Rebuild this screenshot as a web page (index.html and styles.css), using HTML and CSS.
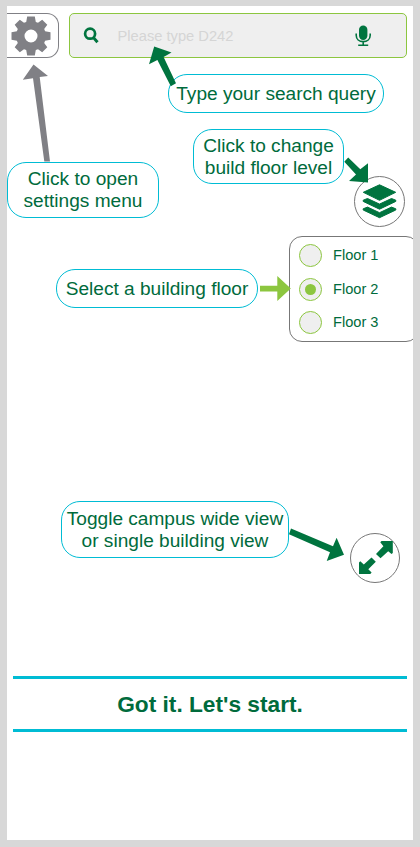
FILE: index.html
```html
<!DOCTYPE html>
<html lang="en">
<head>
<meta charset="utf-8">
<meta name="viewport" content="width=device-width, initial-scale=1">
<title>Campus map help</title>
<link rel="stylesheet" href="styles.css">
</head>
<body>
<main class="screen">
  <header class="topbar">
    <button class="settings" aria-label="Settings">
      <svg width="40" height="40" viewBox="-20 -20 40 40">
        <path class="gray" fill-rule="evenodd" d="M-3.8-19.5H3.8L4.8-14.1L7-13.2L11.2-16.3L16.3-11.2L13.2-7L14.1-4.8L19.5-3.8V3.8L14.1 4.8L13.2 7L16.3 11.2L11.2 16.3L7 13.2L4.8 14.1L3.8 19.5H-3.8L-4.8 14.1L-7 13.2L-11.2 16.3L-16.3 11.2L-13.2 7L-14.1 4.8L-19.5 3.8V-3.8L-14.1-4.8L-13.2-7L-16.3-11.2L-11.2-16.3L-7-13.2L-4.8-14.1ZM0-6.5A6.5 6.5 0 1 0 0 6.5A6.5 6.5 0 1 0 0-6.5Z"/>
      </svg>
    </button>
    <div class="search">
      <svg class="glass" width="16" height="17" viewBox="0 0 16 17">
        <circle cx="7.1" cy="6.7" r="5" fill="none" stroke="#00743f" stroke-width="2.7"/>
        <path d="M10.5 10.6L14.5 15.3" fill="none" stroke="#00743f" stroke-width="3"/>
      </svg>
      <span class="placeholder">Please type D242</span>
      <svg class="mic" width="16" height="22" viewBox="0 0 16 22">
        <rect class="green" x="4" y=".5" width="8.4" height="14.5" rx="4.2"/>
        <path d="M1.2 8.5V10.3C1.2 14.1 4.2 16.6 8.2 16.6S15.2 14.1 15.2 10.3V8.5M8.2 16.4V20M3.2 20.2H13.2" fill="none" stroke="#00743f" stroke-width="1.6"/>
      </svg>
    </div>
  </header>

  <p class="bubble tip-search">Type your search query</p>

  <section class="row row-level">
    <p class="bubble tip-settings">Click to open<br>settings menu</p>
    <p class="bubble tip-level">Click to change<br>build floor level</p>
    <button class="round layers" aria-label="Floor level">
      <svg width="35" height="35" viewBox="0 0 35 35">
        <g class="green" stroke="#00743f" stroke-linejoin="round">
          <path d="M17.5 .8L33.7 8.3L17.5 16.3L1.3 8.3Z"/>
          <path d="M1.2 16.2L5.5 14.5L17.5 20.1L29.5 14.5L33.8 16.2V17.4L17.5 25.2L1.2 17.4Z"/>
          <path d="M1.2 24.8L5.5 23.1L17.5 28.7L29.5 23.1L33.8 24.8V26L17.5 33.7L1.2 26Z"/>
        </g>
      </svg>
    </button>
  </section>

  <section class="row row-floors">
    <p class="bubble tip-floor">Select a building floor</p>
    <div class="floors">
      <label class="floor"><span class="radio"></span>Floor 1</label>
      <label class="floor"><span class="radio checked"></span>Floor 2</label>
      <label class="floor"><span class="radio"></span>Floor 3</label>
    </div>
  </section>

  <section class="row row-view">
    <p class="bubble tip-view">Toggle campus wide view<br>or single building view</p>
    <button class="round expand" aria-label="Toggle view">
      <svg width="36" height="36" viewBox="0 0 36 36">
        <path class="green" d="M22.3 2.2L23.5 1H34.8V13L33.5 14L30.2 11.2L22.5 18.3L18 14L25.4 6.2Z"/>
        <path class="green" d="M1 34V22.5L2.3 21.2L5.8 24.6L13.5 17.5L17.8 21.8L10.3 29.2L13.6 32.5L12.3 34Z"/>
      </svg>
    </button>
  </section>

  <button class="start">Got it. Let's start.</button>

  <svg class="arrows" width="420" height="847" viewBox="0 0 420 847">
    <path class="gray" d="M33.5 64.5L48 76L39.7 77.1L50 161.5H44.3L33 78.2L22.8 79.7Z"/>
    <path class="green" d="M154.2 46.5L171.5 52.5L163.6 57L176 83.3L170.8 86.3L157.4 60L149 64.3Z"/>
    <path class="green" d="M348.2 157.5L360.3 169.3L368 163.3V182.5L349 181L356 174.5L344.3 161.7Z"/>
    <path class="lime" d="M260 285.8H277.3V276L290.8 288.5L277.3 301V291.5H260Z"/>
    <path class="green" d="M291 528.6L333 546.3L336.6 537.8L344 554.7L326.7 561L330 552.2L289 534.2Z"/>
  </svg>
</main>
</body>
</html>
```

FILE: styles.css
```css
* {
  box-sizing: border-box;
}

body {
  margin: 0;
  height: 847px;
  overflow: hidden;
  position: relative;
  padding: 6px 7px 7px;
  background: #d8d8d8;
  font-family: "Liberation Sans", Arial, sans-serif;
  color: #006b3c;
}

button {
  padding: 0;
  font: inherit;
  color: inherit;
  background: #fff;
}

.screen {
  height: 834px;
  padding-top: 7px;
  overflow: hidden;
  background: #fff;
}

.green {
  fill: #00743f;
}

.gray {
  fill: #808085;
}

.lime {
  fill: #8cc63f;
}

.topbar {
  display: flex;
  gap: 10px;
}

.settings {
  display: flex;
  align-items: center;
  width: 52px;
  height: 45px;
  padding-left: 3.5px;
  border: 1px solid #808085;
  border-left: 0;
  border-radius: 0 12px 12px 0;
}

.search {
  display: flex;
  align-items: center;
  width: 338px;
  height: 45px;
  padding: 0 35px 0 13px;
  border: 1px solid #8cc63f;
  border-radius: 5px;
  background: #efefef;
}

.placeholder {
  flex: 1;
  margin-left: 18.5px;
  font-size: 14.7px;
  color: #d5d5d5;
}

.bubble {
  display: flex;
  align-items: center;
  justify-content: center;
  margin: 0;
  flex-shrink: 0;
  border: 1px solid #00bcd4;
  border-radius: 19px;
  background: #fff;
  font-size: 19.1px;
  line-height: 22px;
  text-align: center;
  white-space: nowrap;
}

.tip-search {
  width: 216px;
  height: 39px;
  margin: 16px 0 0 161px;
}

.row {
  display: flex;
  align-items: flex-start;
}

.row-level {
  height: 107px;
  margin-top: 16px;
}

.tip-settings {
  width: 152px;
  height: 56px;
  margin-top: 33px;
}

.tip-level {
  width: 151px;
  height: 55px;
  margin-left: 34px;
}

.round {
  display: flex;
  align-items: center;
  justify-content: center;
  flex-shrink: 0;
  border: 1px solid #777;
  border-radius: 50%;
}

.layers {
  width: 51px;
  height: 51px;
  margin: 47px 0 0 10px;
}

.row-floors {
  height: 106px;
}

.tip-floor {
  width: 202px;
  height: 39px;
  margin: 33px 0 0 49px;
}

.floors {
  flex-shrink: 0;
  width: 130px;
  height: 106px;
  margin-left: 31px;
  padding: 7px 0 0 9px;
  border: 1px solid #777;
  border-radius: 13px;
}

.floor {
  display: flex;
  align-items: center;
  gap: 11px;
  height: 23px;
  margin-bottom: 11px;
  font-size: 14.6px;
  line-height: 16px;
  padding-bottom: 1px;
}

.floor + .floor + .floor {
  margin-top: -1px;
}

.radio {
  display: flex;
  align-items: center;
  justify-content: center;
  width: 23px;
  height: 23px;
  border: 1px solid #8cc63f;
  border-radius: 50%;
  background: #efefef;
}

.checked::after {
  content: "";
  width: 11px;
  height: 11px;
  border-radius: 50%;
  background: #8cc63f;
}

.row-view {
  margin-top: 159px;
}

.tip-view {
  width: 228px;
  height: 57px;
  margin-left: 54px;
}

.expand {
  width: 50px;
  height: 50px;
  margin: 32px 0 0 61px;
  padding-left: 2px;
}

.start {
  display: block;
  width: 394px;
  height: 56px;
  margin: 93px 0 0 6px;
  border: solid #00bcd4;
  border-width: 3px 0;
  font-size: 22.7px;
  line-height: 24px;
  padding-bottom: 1px;
  font-weight: bold;
}

.arrows {
  position: absolute;
  top: 0;
  left: 0;
  pointer-events: none;
}
```
